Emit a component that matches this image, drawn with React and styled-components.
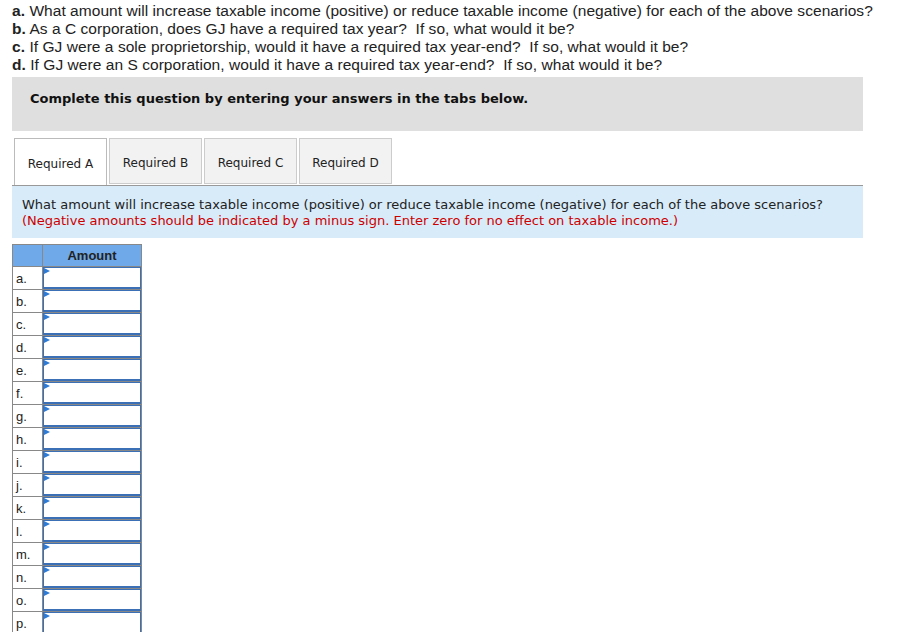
import React from "react";
import styled, { createGlobalStyle } from "styled-components";

const GlobalStyle = createGlobalStyle`
  html, body {
    margin: 0;
    padding: 0;
    background: #ffffff;
  }
`;

const Page = styled.div`
  padding: 2px 0 0 12px;
  width: 851px;
`;

const Questions = styled.div`
  font-family: "Liberation Sans", Arial, sans-serif;
  font-size: 15.5px;
  line-height: 18px;
  letter-spacing: 0.05px;
  color: #222;
  white-space: nowrap;

  b {
    font-weight: 700;
  }
`;

const Instruction = styled.div`
  margin-top: 3px;
  height: 54px;
  box-sizing: border-box;
  background: #dfdfdf;
  padding: 14px 0 0 18px;
  font-family: "DejaVu Sans", Verdana, sans-serif;
  font-weight: 700;
  font-size: 13px;
  line-height: 16px;
  color: #111;
`;

const TabBar = styled.div`
  display: flex;
  gap: 2px;
  margin-top: 7px;
  padding-left: 2px;
  border-bottom: 1px solid #999;
  height: 47px;
`;

const Tab = styled.div`
  width: 93px;
  height: ${p => (p.$active ? "47px" : "46px")};
  box-sizing: border-box;
  border: 1px solid ${p => (p.$active ? "#bbb" : "#ccc")};
  border-bottom: ${p => (p.$active ? "none" : "1px solid #ccc")};
  background: ${p => (p.$active ? "#ffffff" : "#f2f2f2")};
  display: flex;
  align-items: center;
  justify-content: center;
  padding-top: 3px;
  font-family: "DejaVu Sans", Verdana, sans-serif;
  font-size: 12px;
  color: #222;
  margin-bottom: ${p => (p.$active ? "-1px" : "0")};
`;

const InfoBox = styled.div`
  background: #d8ebf9;
  padding: 11px 10px 9px 10px;
  font-family: "DejaVu Sans", Verdana, sans-serif;
  font-size: 13px;
  line-height: 16px;
  color: #222;
`;

const Red = styled.div`
  color: #cc0000;
`;

const Table = styled.table`
  margin-top: 6px;
  border-collapse: collapse;
  border: 1px solid #888;
  font-family: "Liberation Sans", Arial, sans-serif;
  font-size: 13px;
  color: #222;
`;

const HeadCell = styled.th`
  background: #6fa9e9;
  border: 1px solid #888;
  height: 21px;
  padding: 0;
  font-weight: 700;
  font-size: 13px;
  width: ${p => p.$w}px;
`;

const LabelCell = styled.td`
  border: 1px solid #888;
  height: 21px;
  padding: 0 0 0 3px;
  width: 26px;
  vertical-align: middle;
`;

const InputCell = styled.td`
  border: 1px solid #888;
  padding: 0;
  height: 21px;
`;

const Field = styled.div`
  position: relative;
  box-sizing: border-box;
  height: 22px;
  width: 98px;
  border: 1px solid #3b6fb6;
  border-bottom-width: 2px;
  background: #fff;

  &::before {
    content: "";
    position: absolute;
    left: 0;
    top: 0;
    border-top: 3px solid transparent;
    border-bottom: 3px solid transparent;
    border-left: 6px solid #2e7bd6;
  }
`;

const rows = "abcdefghijklmnop".split("");

export default function App() {
  return (
    <>
      <GlobalStyle />
      <Page>
        <Questions>
          <div><b>a.</b> What amount will increase taxable income (positive) or reduce taxable income (negative) for each of the above scenarios?</div>
          <div><b>b.</b> As a C corporation, does GJ have a required tax year?&nbsp; If so, what would it be?</div>
          <div><b>c.</b> If GJ were a sole proprietorship, would it have a required tax year-end?&nbsp; If so, what would it be?</div>
          <div><b>d.</b> If GJ were an S corporation, would it have a required tax year-end?&nbsp; If so, what would it be?</div>
        </Questions>
        <Instruction>Complete this question by entering your answers in the tabs below.</Instruction>
        <TabBar>
          <Tab $active>Required A</Tab>
          <Tab>Required B</Tab>
          <Tab>Required C</Tab>
          <Tab>Required D</Tab>
        </TabBar>
        <InfoBox>
          <div>What amount will increase taxable income (positive) or reduce taxable income (negative) for each of the above scenarios?</div>
          <Red>(Negative amounts should be indicated by a minus sign. Enter zero for no effect on taxable income.)</Red>
        </InfoBox>
        <Table>
          <thead>
            <tr>
              <HeadCell $w={29}></HeadCell>
              <HeadCell $w={98}>Amount</HeadCell>
            </tr>
          </thead>
          <tbody>
            {rows.map(r => (
              <tr key={r}>
                <LabelCell>{r}.</LabelCell>
                <InputCell><Field /></InputCell>
              </tr>
            ))}
          </tbody>
        </Table>
      </Page>
    </>
  );
}
